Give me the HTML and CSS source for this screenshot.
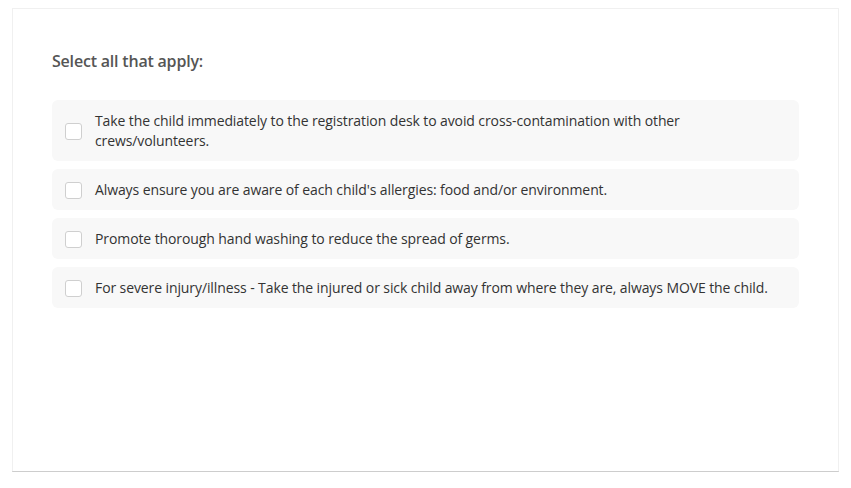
FILE: index.html
```html
<!DOCTYPE html>
<html lang="en">
  <head>
    <meta charset="UTF-8" />
    <title>Select all that apply</title>
    <link rel="stylesheet" href="styles.css">
  </head>
  <body>
    <section class="card">
      <h2 class="question">Select all that apply:</h2>
      <ul class="options">
        <li class="option">
          <span class="box"></span>
          <span class="label">Take the child immediately to the registration desk to avoid cross-contamination with other crews/volunteers.</span>
        </li>
        <li class="option">
          <span class="box"></span>
          <span class="label">Always ensure you are aware of each child's allergies: food and/or environment.</span>
        </li>
        <li class="option">
          <span class="box"></span>
          <span class="label">Promote thorough hand washing to reduce the spread of germs.</span>
        </li>
        <li class="option">
          <span class="box"></span>
          <span class="label">For severe injury/illness - Take the injured or sick child away from where they are, always MOVE the child.</span>
        </li>
      </ul>
    </section>
  </body>
</html>
```

FILE: styles.css
```css
body {
  margin: 8px 12px;
  background-color: #ffffff;
  font-family: "Open Sans", "Noto Sans", sans-serif;
  color: #333333;
}
.card {
  position: relative;
  box-sizing: border-box;
  height: 464px;
  padding: 40px 39px;
  background-color: #ffffff;
  border: 1px solid #f0f0f0;
  border-bottom-color: #e0e0e0;
}
/* soft shadow under the card */
.card::after {
  content: "";
  position: absolute;
  left: -6px;
  right: -6px;
  top: 100%;
  height: 12px;
  background: linear-gradient(rgba(0, 0, 0, 0.09), rgba(0, 0, 0, 0));
}
.card::before {
  content: "";
  position: absolute;
  top: 4px;
  bottom: 0;
  left: -10px;
  right: -10px;
  z-index: -1;
  background: linear-gradient(90deg, rgba(0, 0, 0, 0), rgba(0, 0, 0, 0.06) 10px, rgba(0, 0, 0, 0) 10px, rgba(0, 0, 0, 0) calc(100% - 10px), rgba(0, 0, 0, 0.06) calc(100% - 10px), rgba(0, 0, 0, 0));
}
.question {
  margin: 0 0 27px 0;
  font-size: 16px;
  line-height: 24px;
  font-weight: 600;
  letter-spacing: -0.2px;
  color: #555555;
}
.options {
  margin: 0;
  padding: 0;
  list-style-type: none;
  display: flex;
  flex-direction: column;
  gap: 8px;
}
.option {
  display: flex;
  align-items: center;
  gap: 13px;
  padding: 11px 20px 10px 13px;
  background-color: #f8f8f8;
  border-radius: 6px;
  font-size: 14px;
  line-height: 20px;
  letter-spacing: -0.1px;
}
.box {
  flex: none;
  box-sizing: border-box;
  width: 17px;
  height: 17px;
  border: 1px solid #cfcfcf;
  border-radius: 3px;
  background-color: #ffffff;
}
```
